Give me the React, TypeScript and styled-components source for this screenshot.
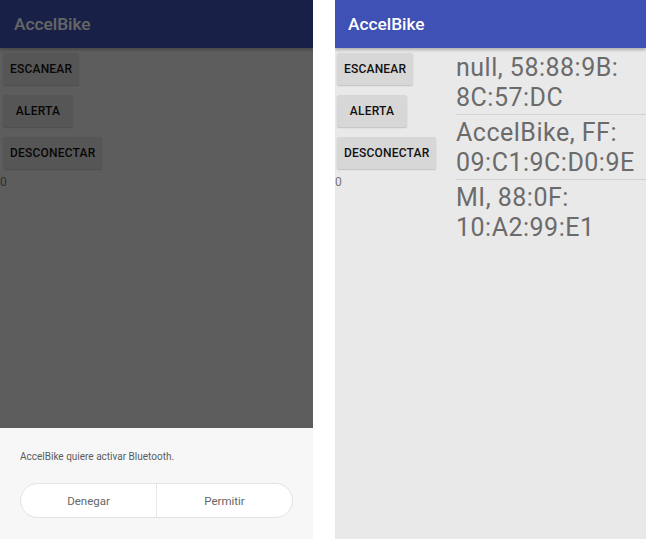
import React from "react";
import styled, { createGlobalStyle } from "styled-components";

const GlobalStyle = createGlobalStyle`
  html, body {
    margin: 0;
    padding: 0;
    background: #ffffff;
  }
  body {
    font-family: Roboto, "Noto Sans", "Liberation Sans", sans-serif;
  }
`;

const Stage = styled.div`
  display: flex;
  gap: 22px;
  width: 646px;
  height: 539px;
  overflow: hidden;
`;

const Phone = styled.div<{ $w: number }>`
  position: relative;
  width: ${(p) => p.$w}px;
  height: 539px;
  flex-shrink: 0;
  background: #e9e9e9;
  display: flex;
  flex-direction: column;
  overflow: hidden;
`;

const AppBar = styled.header<{ $offset: number }>`
  height: 48px;
  flex-shrink: 0;
  background: #3f51b5;
  display: flex;
  align-items: center;
  padding-left: ${(p) => p.$offset}px;
  box-shadow: 0 2px 3px rgba(0, 0, 0, 0.25);
  position: relative;
  z-index: 1;
`;

const Title = styled.h1`
  margin: 0;
  color: #ffffff;
  font-size: 17.3px;
  font-weight: 500;
  letter-spacing: 0;
`;

const Body = styled.main`
  flex: 1;
  display: flex;
  min-height: 0;
`;

const Controls = styled.section`
  width: 121px;
  flex-shrink: 0;
  display: flex;
  flex-direction: column;
  align-items: flex-start;
  padding-top: 5px;
`;

const ButtonStack = styled.div<{ $offset: number }>`
  display: flex;
  flex-direction: column;
  align-items: flex-start;
  gap: 10px;
  padding-left: ${(p) => p.$offset}px;
`;

const ActionButton = styled.button`
  height: 32px;
  min-width: 70px;
  padding: 0 7px;
  border: none;
  border-radius: 2px;
  background: #d7d7d7;
  box-shadow: 0 1px 1.5px rgba(0, 0, 0, 0.18);
  color: #111111;
  font-family: Roboto, "Noto Sans", sans-serif;
  font-size: 12px;
  font-weight: 500;
  letter-spacing: 0.2px;
  text-transform: uppercase;
  display: flex;
  align-items: center;
  justify-content: center;
  cursor: pointer;
`;

const Counter = styled.span`
  margin-top: 6px;
  font-size: 12px;
  line-height: 14px;
  color: #757575;
`;

const DeviceList = styled.ul`
  flex: 1;
  list-style: none;
  margin: 0;
  padding: 2px 0 0;
`;

const DeviceItem = styled.li`
  font-size: 25px;
  line-height: 30px;
  letter-spacing: 0.5px;
  color: #6b6b6b;
  padding: 3px 0 1px;
  border-bottom: 1px solid #d3d3d3;
  &:last-child {
    border-bottom: none;
  }
`;

const Line = styled.span`
  display: block;
  white-space: nowrap;
`;

const Scrim = styled.div`
  position: absolute;
  inset: 0;
  background: rgba(0, 0, 0, 0.6);
  z-index: 2;
`;

const Sheet = styled.div`
  position: absolute;
  left: 0;
  right: 0;
  bottom: 0;
  height: 111px;
  box-sizing: border-box;
  background: #f7f7f7;
  padding: 23px 20px 0;
  z-index: 3;
`;

const SheetMessage = styled.p`
  margin: 0;
  font-size: 10px;
  line-height: 12px;
  color: #5c5c5c;
`;

const Pill = styled.div`
  margin-top: 20px;
  height: 35px;
  box-sizing: border-box;
  display: flex;
  border: 1px solid #e2e2e2;
  border-radius: 18px;
  background: #ffffff;
  overflow: hidden;
`;

const PillButton = styled.button`
  flex: 1;
  border: none;
  background: transparent;
  font-family: Roboto, "Noto Sans", sans-serif;
  font-size: 11.5px;
  color: #666666;
  padding: 0;
  cursor: pointer;
  & + & {
    border-left: 1px solid #e6e6e6;
  }
`;

const actions = ["Escanear", "Alerta", "Desconectar"];

const devices: string[][] = [
  ["null, 58:88:9B:", "8C:57:DC"],
  ["AccelBike, FF:", "09:C1:9C:D0:9E"],
  ["MI, 88:0F:", "10:A2:99:E1"],
];

function Screen({
  width,
  offset,
  showDevices,
  children,
}: {
  width: number;
  offset: number;
  showDevices: boolean;
  children?: React.ReactNode;
}) {
  return (
    <Phone $w={width}>
      <AppBar $offset={offset + 11}>
        <Title>AccelBike</Title>
      </AppBar>
      <Body>
        <Controls>
          <ButtonStack $offset={offset}>
            {actions.map((a) => (
              <ActionButton key={a}>{a}</ActionButton>
            ))}
          </ButtonStack>
          <Counter>0</Counter>
        </Controls>
        {showDevices && (
          <DeviceList>
            {devices.map((d) => (
              <DeviceItem key={d[0]}>
                {d.map((l) => (
                  <Line key={l}>{l}</Line>
                ))}
              </DeviceItem>
            ))}
          </DeviceList>
        )}
      </Body>
      {children}
    </Phone>
  );
}

export default function App() {
  return (
    <>
      <GlobalStyle />
      <Stage>
        <Screen width={313} offset={3} showDevices={false}>
          <Scrim />
          <Sheet>
            <SheetMessage>AccelBike quiere activar Bluetooth.</SheetMessage>
            <Pill>
              <PillButton>Denegar</PillButton>
              <PillButton>Permitir</PillButton>
            </Pill>
          </Sheet>
        </Screen>
        <Screen width={311} offset={2} showDevices={true} />
      </Stage>
    </>
  );
}
